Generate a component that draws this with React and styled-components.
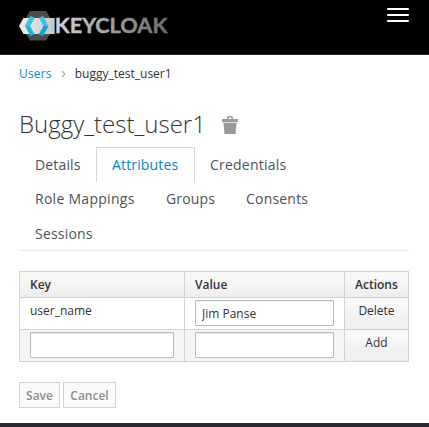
import React from "react";
import styled, { createGlobalStyle } from "styled-components";

const GlobalStyle = createGlobalStyle`
  * { box-sizing: border-box; }
  html, body { height: 100%; }
  body {
    margin: 0;
    overflow: hidden;
    background: #fff;
    color: #333;
    font: 12px/20px "Open Sans", sans-serif;
  }
`;

const Page = styled.div`
  height: 427px;
  display: flex;
  flex-direction: column;
`;

const Header = styled.header`
  flex: none;
  height: 55px;
  display: flex;
  justify-content: space-between;
  align-items: flex-start;
  padding: 8px 20px 0 19px;
  background: #000;
  border-bottom: 1px solid #292929;
`;

const Logo = styled.svg`
  display: block;
  width: 152px;
  height: 36px;
`;

const LogoText = styled.text`
  font: 700 21.5px "Lato", sans-serif;
  stroke: url(#word);
  stroke-width: 0.4px;
`;

const MenuButton = styled.button`
  display: flex;
  flex-direction: column;
  gap: 4px;
  width: 22px;
  padding: 0;
  border: 0;
  background: none;
`;

const MenuBar = styled.span`
  height: 2px;
  border-radius: 1px;
  background: #fff;
`;

const Main = styled.main`
  flex: 1;
  padding: 0 20px 0 19px;
`;

const Breadcrumb = styled.nav`
  display: flex;
  align-items: center;
  height: 20px;
  margin-top: 9px;
`;

const Crumb = styled.a`
  color: ${(p) => (p.$link ? "#0088ce" : "#333")};
  letter-spacing: ${(p) => (p.$link ? 0.15 : 0)}px;
`;

const Chevron = styled.svg`
  width: 5px;
  height: 8px;
  margin: 0 8.4px 0 9.8px;
`;

const TitleRow = styled.div`
  display: flex;
  align-items: center;
  height: 32px;
  margin-top: 24px;
`;

const Title = styled.h1`
  margin: 0;
  font-size: 24px;
  font-weight: 300;
  line-height: 32px;
`;

const Trash = styled.svg`
  width: 16px;
  height: 18px;
  margin: 2px 0 0 16px;
`;

const Tabs = styled.ul`
  display: flex;
  flex-wrap: wrap;
  margin: 7px 0 0;
  padding: 0;
  height: 104px;
  align-content: flex-start;
  list-style: none;
  border-bottom: 1px solid #ececec;
`;

const Tab = styled.li`
  width: ${(p) => p.$width}px;
  height: ${(p) => p.$height}px;
  padding: ${(p) => p.$top || 8}px 0 0 15px;
  border: 1px solid ${(p) => (p.$active ? "#d7d7d7" : "transparent")};
  border-bottom: 0;
  color: ${(p) => (p.$active ? "#0088ce" : "#4d5258")};
  font-size: 14px;
  line-height: 18px;
  letter-spacing: ${(p) => p.$spacing}px;
  white-space: nowrap;
`;

const CredentialsTab = styled(Tab)`
  margin-left: -1px;
`;

const Table = styled.table`
  width: 390px;
  margin-top: 20px;
  table-layout: fixed;
  border-collapse: collapse;
`;

const Col = styled.col`
  width: ${(p) => p.$width}px;
`;

const HeadCell = styled.th`
  height: 26px;
  padding: 3px 10px 2px;
  border: 1px solid #d1d1d1;
  background: linear-gradient(#fafafa, #ededed);
  text-align: left;
  font-weight: 600;
`;

const Row = styled.tr`
  height: 32px;
  background: ${(p) => (p.$striped ? "#f5f5f5" : "#fff")};
`;

const Cell = styled.td`
  padding: ${(p) => (p.$text ? 3 : 2)}px 10px 3px;
  border: 1px solid #d1d1d1;
  vertical-align: top;
`;

const ActionCell = styled(Cell)`
  padding: 3px 0 0;
  background: linear-gradient(#fafafa, #ededed);
  text-align: center;
`;

const Input = styled.input`
  display: block;
  width: 100%;
  height: 26px;
  padding: 2px 6px;
  border: 1px solid #bababa;
  border-radius: 1px;
  background: #fff;
  box-shadow: inset 0 1px 1px rgba(0, 0, 0, 0.075);
  color: #333;
  font: inherit;
`;

const Buttons = styled.div`
  display: flex;
  gap: 3px;
  margin-top: 20px;
`;

const Button = styled.button`
  width: ${(p) => p.$width}px;
  height: 26px;
  padding: 2px 0 1px;
  border: 1px solid #d1d1d1;
  background: #fafafa;
  color: #8b8d8f;
  font: 600 12px/20px "Open Sans", sans-serif;
`;

const Footer = styled.footer`
  height: 4px;
  background: #292a35;
`;

const tabs = [
  { name: "Details", width: 77, height: 35, spacing: 0.15 },
  { name: "Attributes", width: 99, height: 35, spacing: 0.15, active: true },
  { name: "Credentials", width: 110, height: 35, spacing: 0.22, as: CredentialsTab },
  { name: "Role Mappings", width: 131, height: 34, spacing: 0.28, top: 7 },
  { name: "Groups", width: 80, height: 34, spacing: 0.15, top: 7 },
  { name: "Consents", width: 100, height: 34, spacing: 0.2, top: 7 },
  { name: "Sessions", width: 90, height: 34, spacing: 0.2 },
];

function KeycloakLogo() {
  return (
    <Logo viewBox="0 0 152 36" aria-label="Keycloak">
      <defs>
        <linearGradient id="word" x1="0" x2="1">
          <stop offset="0" stopColor="#d4d4d4" />
          <stop offset="1" stopColor="#6c6c6c" />
        </linearGradient>
        <linearGradient id="band" x1="0" x2="1">
          <stop offset="0" stopColor="#f0f0f0" />
          <stop offset="1" stopColor="#c6c6c6" />
        </linearGradient>
      </defs>
      <path d="M11 3h16l4.500 7.500v15L27 32.500H11L6.500 25.500v-15z" fill="#4d4d4d" />
      <path d="M4.500 10H35.700v16H4.500L0 18z" fill="url(#band)" />
      <path d="M11.500 8l4 2-4.500 8 4.500 8-4 2L6 18z" fill="#20b3d8" />
      <path d="M11.500 8l4 2-4.500 8H6z" fill="#42c3e3" />
      <path d="M24 8l-4 2 4.500 8-4.500 8 4 2 5.500-10z" fill="#42c3e3" />
      <path d="M24.500 18h5L24 28l-4-2z" fill="#0fa6d0" />
      <LogoText x="35.800" y="25.400" textLength="112.500" lengthAdjust="spacingAndGlyphs" fill="url(#word)">
        KEYCLOAK
      </LogoText>
    </Logo>
  );
}

export default function App() {
  return (
    <Page>
      <GlobalStyle />
      <Header>
        <KeycloakLogo />
        <MenuButton aria-label="Toggle navigation">
          <MenuBar />
          <MenuBar />
          <MenuBar />
        </MenuButton>
      </Header>
      <Main>
        <Breadcrumb>
          <Crumb $link>Users</Crumb>
          <Chevron viewBox="0 0 5 8">
            <path d="M1 1l3 3-3 3" fill="none" stroke="#aaa" strokeWidth="1.1" />
          </Chevron>
          <Crumb>buggy_test_user1</Crumb>
        </Breadcrumb>
        <TitleRow>
          <Title>Buggy_test_user1</Title>
          <Trash viewBox="0 0 16 18">
            <path d="M5 3V1.500Q5 0 6.500 0h3Q11 0 11 1.500V3H9.500V1.500h-3V3z" fill="#999" />
            <path d="M0 3h16v3H0z" fill="#999" />
            <path d="M1 6h14v1H1z" fill="#ddd" />
            <path d="M1.500 7h13L13.500 18h-11z" fill="#999" />
          </Trash>
        </TitleRow>
        <Tabs>
          {tabs.map(({ as: Item = Tab, ...t }) => (
            <Item key={t.name} $active={t.active} $width={t.width} $height={t.height} $spacing={t.spacing} $top={t.top}>
              {t.name}
            </Item>
          ))}
        </Tabs>
        <Table>
          <colgroup>
            <Col $width={165} />
            <Col $width={160} />
            <Col $width={64} />
          </colgroup>
          <thead>
            <tr>
              <HeadCell>Key</HeadCell>
              <HeadCell>Value</HeadCell>
              <HeadCell>Actions</HeadCell>
            </tr>
          </thead>
          <tbody>
            <Row>
              <Cell $text>user_name</Cell>
              <Cell><Input defaultValue="Jim Panse" /></Cell>
              <ActionCell>Delete</ActionCell>
            </Row>
            <Row $striped>
              <Cell><Input /></Cell>
              <Cell><Input /></Cell>
              <ActionCell>Add</ActionCell>
            </Row>
          </tbody>
        </Table>
        <Buttons>
          <Button $width={41}>Save</Button>
          <Button $width={53}>Cancel</Button>
        </Buttons>
      </Main>
      <Footer />
    </Page>
  );
}
